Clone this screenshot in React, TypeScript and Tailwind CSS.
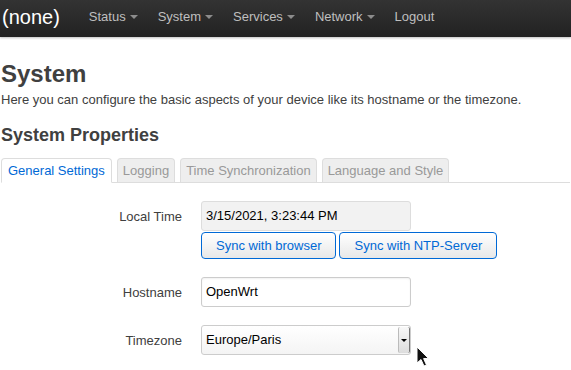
import React from "react"

const navItems = [
  { label: "Status", caret: true },
  { label: "System", caret: true },
  { label: "Services", caret: true },
  { label: "Network", caret: true },
  { label: "Logout", caret: false },
]

const tabs = [
  { label: "General Settings", active: true },
  { label: "Logging", active: false },
  { label: "Time Synchronization", active: false },
  { label: "Language and Style", active: false },
]

function Navbar() {
  return (
    <div className="flex h-[37px] items-center bg-gradient-to-b from-[#333] to-[#222] pb-[4px] shadow-[0_1px_2px_rgba(0,0,0,0.25)]">
      <span className="pl-[2px] text-[20px] leading-[24px] text-white">(none)</span>
      <ul className="ml-[19px] flex items-center">
        {navItems.map((item) => (
          <li
            key={item.label}
            className="flex items-center px-[10px] text-[13px] leading-[18px] text-[#bfbfbf]"
          >
            {item.label}
            {item.caret && (
              <span className="ml-[4px] mt-[1px] h-0 w-0 border-x-4 border-t-4 border-x-transparent border-t-[#8c8c8c]" />
            )}
          </li>
        ))}
      </ul>
    </div>
  )
}

function FormRow({
  label,
  className,
  children,
}: {
  label: string
  className?: string
  children: React.ReactNode
}) {
  return (
    <div className={"flex items-start " + (className ?? "")}>
      <div className="w-[181px] pt-[8px] text-right text-[13px] leading-[16px] text-[#404040]">
        {label}
      </div>
      <div className="ml-[19px] flex flex-col">{children}</div>
    </div>
  )
}

function SyncButton({ children }: { children: React.ReactNode }) {
  return (
    <button className="h-[27px] rounded-[4px] border border-[#0069d6] bg-gradient-to-b from-white to-[#e8e8e8] px-[14px] text-[13px] leading-[16px] text-[#0069d6]">
      {children}
    </button>
  )
}

export default function App() {
  return (
    <div className="relative h-[370px] w-[571px] overflow-hidden bg-white font-['Liberation_Sans',Arial,sans-serif] text-[#404040]">
      <Navbar />

      <div className="px-[1px]">
        <h2 className="mt-[23px] text-[24px] font-bold leading-[28px] text-[#404040]">System</h2>
        <p className="mt-[4px] text-[13px] leading-[16px]">
          Here you can configure the basic aspects of your device like its hostname or the timezone.
        </p>
        <h3 className="mt-[16px] text-[18px] font-bold leading-[22px] text-[#404040]">
          System Properties
        </h3>

        <ul className="mt-[12px] flex border-b border-[#ddd]">
          {tabs.map((tab) =>
            tab.active ? (
              <li
                key={tab.label}
                className="-mb-px mr-[5px] rounded-t-[4px] border border-b-white border-[#ddd] bg-white px-[6px] pb-[3px] pt-[4px] text-[13px] leading-[16px] text-[#0069d6]"
              >
                {tab.label}
              </li>
            ) : (
              <li
                key={tab.label}
                className="mr-[5px] rounded-t-[4px] border border-b-0 border-[#ddd] bg-[#eee] px-[5px] pb-[3px] pt-[4px] text-[13px] leading-[16px] text-[#999]"
              >
                {tab.label}
              </li>
            )
          )}
        </ul>

        <div className="mt-[18px] flex flex-col">
          <FormRow label="Local Time">
            <div className="flex h-[30px] w-[210px] items-center rounded-[3px] border border-[#ddd] bg-[#f2f2f2] px-[4px] text-[13px] text-black">
              3/15/2021, 3:23:44 PM
            </div>
            <div className="mt-[1px] flex gap-[3px]">
              <SyncButton>Sync with browser</SyncButton>
              <SyncButton>Sync with NTP-Server</SyncButton>
            </div>
          </FormRow>

          <FormRow label="Hostname" className="mt-[18px]">
            <div className="flex h-[30px] w-[210px] items-center rounded-[3px] border border-[#ccc] bg-white px-[4px] text-[13px] text-black shadow-[inset_0_1px_2px_rgba(0,0,0,0.06)]">
              OpenWrt
            </div>
          </FormRow>

          <FormRow label="Timezone" className="mt-[18px]">
            <div className="flex h-[30px] w-[210px] items-stretch rounded-[3px] border border-[#ccc] bg-gradient-to-b from-white to-[#f4f4f4] text-[13px] text-black">
              <span className="flex flex-1 items-center px-[4px]">Europe/Paris</span>
              <span className="my-[1px] mr-[1px] flex w-[11px] items-center justify-center rounded-[2px] border-l border-[#bbb] bg-gradient-to-b from-[#f8f8f8] to-[#ddd] shadow-[1px_0_0_#777]">
                <span className="h-0 w-0 border-x-[3px] border-t-[3px] border-x-transparent border-t-black" />
              </span>
            </div>
          </FormRow>
        </div>
      </div>

      <svg
        className="absolute left-[416px] top-[346px]"
        width="14"
        height="22"
        viewBox="0 0 14 22"
      >
        <path
          d="M1 1 L1 17 L5 13.5 L8 20 L10.5 19 L7.6 12.6 L12.5 12.4 Z"
          fill="#111"
          stroke="#fff"
          strokeWidth="1"
          strokeLinejoin="round"
        />
      </svg>
    </div>
  )
}
